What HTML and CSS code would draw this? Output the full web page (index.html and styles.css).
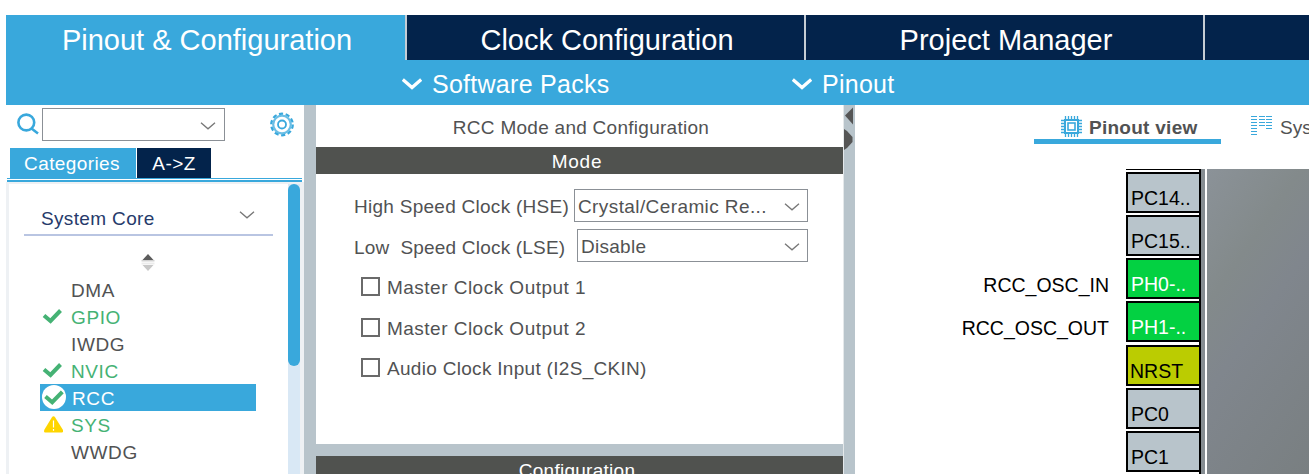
FILE: index.html
```html
<!DOCTYPE html>
<html lang="en">
<head>
<meta charset="utf-8">
<title>Pinout &amp; Configuration</title>
<link rel="stylesheet" href="styles.css">
</head>
<body>
<div class="app">
  <nav class="main-tabs">
    <div class="main-tab main-tab-active">Pinout &amp; Configuration</div>
    <div class="main-tab">Clock Configuration</div>
    <div class="main-tab">Project Manager</div>
    <div class="main-tab"></div>
  </nav>
  <div class="sub-bar">
    <div class="sub-item"><svg class="sub-chevron" viewBox="0 0 20 12"><path d="M.8 1.5 L10 9.5 L19.2 1.5"/></svg><span>Software Packs</span></div>
    <div class="sub-item"><svg class="sub-chevron" viewBox="0 0 20 12"><path d="M.8 1.5 L10 9.5 L19.2 1.5"/></svg><span>Pinout</span></div>
  </div>
  <main class="workspace">
    <aside class="sidebar">
      <div class="search-row">
        <svg class="search-icon" viewBox="0 0 22 22"><circle cx="9.3" cy="9.5" r="7.9"/><path d="M14.5 15.5 L21 20.5"/></svg>
        <div class="combo search-combo"><svg class="chevron" viewBox="0 0 16 8"><path d="M1 .8 L8 6.8 L15 .8"/></svg></div>
        <svg class="gear-icon" viewBox="0 0 24 25"><circle class="gear-teeth" cx="12" cy="12.5" r="10.8"/><circle class="gear-ring" cx="12" cy="12.5" r="8.8"/><circle class="gear-hub" cx="12" cy="12.5" r="4"/></svg>
      </div>
      <div class="side-tabs">
        <div class="side-tab side-tab-active">Categories</div>
        <div class="side-tab">A-&gt;Z</div>
      </div>
      <div class="side-rule"></div>
      <div class="tree">
        <div class="tree-content">
          <div class="group"><span>System Core</span><svg class="chevron" viewBox="0 0 16 8"><path d="M1 .8 L8 6.8 L15 .8"/></svg></div>
          <svg class="sorter" viewBox="0 0 14 18"><path fill="#5c5c5c" d="M7 0 L12.5 6 H1.5 Z"/><path fill="#d0d0d0" d="M.5 6 H13.5 V7.5 H.5 Z"/><path fill="#ececec" d="M.5 8.5 H13.5 V10.5 H.5 Z"/><path fill="#c8c8c8" d="M1.5 11 H12.5 L7 17 Z"/></svg>
          <ul class="items">
            <li class="item"><span class="mark"></span>DMA</li>
            <li class="item item-ok"><span class="mark"><svg viewBox="0 0 24 24"><path class="check" d="M2 11.5 L8.5 17 L18.5 6.5"/></svg></span>GPIO</li>
            <li class="item"><span class="mark"></span>IWDG</li>
            <li class="item item-ok"><span class="mark"><svg viewBox="0 0 24 24"><path class="check" d="M2 11.5 L8.5 17 L18.5 6.5"/></svg></span>NVIC</li>
            <li class="item item-selected"><span class="mark"><svg viewBox="0 0 24 24"><circle cx="12" cy="12" r="12" fill="#fff"/><path class="check" d="M3.5 11.5 L10.2 17.2 L20.3 6.8"/></svg></span>RCC</li>
            <li class="item item-ok"><span class="mark"><svg viewBox="0 0 24 24"><path fill="#fed500" d="M9.8 5.5 Q11.5 2.8 13.2 5.5 L21 18 Q21.5 20.5 20 20.5 H3 Q1.5 20.5 2.2 18 Z"/><path stroke="#fff" stroke-width="1.2" d="M11.5 8.5 V15.5 M11.5 17 V18.8"/></svg></span>SYS</li>
            <li class="item"><span class="mark"></span>WWDG</li>
          </ul>
        </div>
        <div class="scrollbar"><div class="scroll-thumb"></div></div>
      </div>
    </aside>
    <div class="splitter"></div>
    <section class="config">
      <div class="config-title">RCC Mode and Configuration</div>
      <div class="section-bar"><span>Mode</span></div>
      <div class="mode-form">
        <div class="field"><label>High Speed Clock (HSE)</label><div class="combo combo-hse"><span>Crystal/Ceramic Re...</span><svg class="chevron" viewBox="0 0 16 8"><path d="M1 .8 L8 6.8 L15 .8"/></svg></div></div>
        <div class="field field-lse"><label>Low&nbsp; Speed Clock (LSE)</label><div class="combo combo-lse"><span>Disable</span><svg class="chevron" viewBox="0 0 16 8"><path d="M1 .8 L8 6.8 L15 .8"/></svg></div></div>
        <div class="option"><span class="box"></span><span class="option-label">Master Clock Output 1</span></div>
        <div class="option"><span class="box"></span><span class="option-label">Master Clock Output 2</span></div>
        <div class="option"><span class="box"></span><span class="option-label audio">Audio Clock Input (I2S_CKIN)</span></div>
      </div>
      <div class="section-bar section-bar-lower"><span>Configuration</span></div>
    </section>
    <div class="splitter splitter-right">
      <svg viewBox="0 0 12 48"><path d="M9 2.5 L1 10.5 L9 19.5 Z"/><path d="M0 24 L3 26 L8.5 32 V37 L3 43 L0 45 Z"/></svg>
    </div>
    <section class="view">
      <div class="view-tabs">
        <div class="view-tab view-tab-active">
          <svg class="chip-icon" viewBox="0 0 21 21"><rect x="4" y="4" width="13" height="13" fill="none" stroke-width="2"/><rect x="7" y="7" width="7" height="7" fill="none" stroke-width="1.6"/><path stroke-width="1.3" d="M4.5 0V3M7.5 0V3M10.5 0V3M13.5 0V3M16.5 0V3M4.5 18V21M7.5 18V21M10.5 18V21M13.5 18V21M16.5 18V21M0 4.5H3M0 7.5H3M0 10.5H3M0 13.5H3M0 16.5H3M18 4.5H21M18 7.5H21M18 10.5H21M18 13.5H21M18 16.5H21"/></svg>
          <span>Pinout view</span>
        </div>
        <div class="view-tab">
          <svg class="list-icon" viewBox="0 0 21 20"><path d="M0 .5H6M8 .5H14M15 .5H21M0 3.5H6M8 3.5H14M15 3.5H21M0 6.5H6M8 6.5H14M15 6.5H21M0 9.5H6M8 9.5H14M15 9.5H21M0 12.5H6M15 12.5H21M0 15.5H6M0 18.5H6"/></svg>
          <span>Sys</span>
        </div>
      </div>
      <div class="pinout">
        <div class="signals"><span>RCC_OSC_IN</span><span>RCC_OSC_OUT</span></div>
        <div class="pins">
          <div class="pin">PC14..</div>
          <div class="pin">PC15..</div>
          <div class="pin pin-used">PH0-..</div>
          <div class="pin pin-used">PH1-..</div>
          <div class="pin pin-reset">NRST</div>
          <div class="pin">PC0</div>
          <div class="pin">PC1</div>
        </div>
        <div class="chip-edge"></div>
        <div class="chip-body"></div>
      </div>
    </section>
  </main>
</div>
</body>
</html>
```
FILE: styles.css
```css
* { box-sizing: border-box; }
body {
  margin: 0;
  background: #fff;
  color: #515253;
  font: 19px/27px "Liberation Sans", Arial, sans-serif;
  letter-spacing: .27px;
  overflow: hidden;
}
svg { display: block; flex: none; }
.app {
  height: 474px;
  padding: 15px 0 0 6px;
  display: flex;
  flex-direction: column;
  white-space: nowrap;
  overflow: hidden;
}

/* top navigation */
.main-tabs { display: flex; height: 45px; flex: none; background: #39a8dc; }
.main-tab {
  width: 399px;
  flex: none;
  padding: 3px 0 0 3px;
  background: #03234b;
  border-right: 2px solid #c5ccd4;
  color: #fff;
  font-size: 29px;
  line-height: 44px;
  letter-spacing: 0;
  text-align: center;
}
.main-tab-active { width: 401px; background: #39a8dc; }
.sub-bar {
  height: 45px;
  flex: none;
  padding-left: 396px;
  display: flex;
  background: #39a8dc;
  color: #fff;
  font-size: 25px;
  line-height: 48px;
}
.sub-item { width: 390px; display: flex; gap: 10px; }
.sub-chevron { width: 20px; height: 12px; margin-top: 18px; fill: none; stroke: #fff; stroke-width: 3.3; }

.workspace { flex: 1; min-height: 0; display: flex; }

/* sidebar */
.sidebar { width: 298px; flex: none; display: flex; flex-direction: column; }
.search-row { height: 43px; flex: none; display: flex; padding: 3px 0 0 11px; }
.search-icon { width: 22px; height: 22px; margin: 5px 3px 0 0; fill: none; stroke: #39a8dc; stroke-width: 2.6; }
.combo {
  height: 33px;
  border: 1px solid #8b9096;
  background: #fff;
  display: flex;
  align-items: center;
  justify-content: space-between;
  padding: 2px 7px 0 3px;
}
.chevron { width: 16px; height: 8px; fill: none; stroke: #777; stroke-width: 1.3; }
.search-combo { width: 183px; justify-content: flex-end; padding-right: 8px; }
.gear-icon { width: 24px; height: 25px; margin: 4px 0 0 45px; fill: none; stroke: #39a8dc; }
.gear-teeth { stroke-width: 2.2; stroke-dasharray: 4.2 2.586; }
.gear-ring { stroke-width: 2.2; stroke-opacity: .75; }
.gear-hub { stroke-width: 1.8; }
.side-tabs { display: flex; gap: 1px; height: 30px; flex: none; padding-left: 4px; color: #fff; line-height: 31px; text-align: center; letter-spacing: .4px; }
.side-tab { width: 74px; background: #03234b; }
.side-tab-active { width: 126px; padding-right: 2px; background: #39a8dc; }
.side-rule { height: 4px; flex: none; margin: 0 2px 0 1px; border-top: 1px solid #39a8dc; border-bottom: 2px solid #39a8dc; }
.tree { flex: 1; min-height: 0; display: flex; padding: 2px 4px 0 3px; background: #eef1f4; }
.tree-content { flex: 1; background: #fff; padding: 19px 15px 0; }
.group {
  height: 33px;
  padding: 2px 18px 0 17px;
  display: flex;
  justify-content: space-between;
  border-bottom: 2px solid #b9c5e2;
  color: #263a6b;
  letter-spacing: .35px;
}
.group .chevron { margin-top: 6px; }
.sorter { width: 14px; height: 18px; margin: 18px 0 0 117px; }
.items { list-style: none; margin: 4px 0 0 16px; padding: 0; width: 216px; }
.item { height: 27px; display: flex; line-height: 29px; letter-spacing: .6px; }
.item-ok { color: #45b274; }
.item-selected { background: #39a8dc; color: #fff; }
.item-selected .mark { width: 32px; }
.mark { width: 31px; padding: 1px 0 0 2px; }
.mark svg { width: 24px; height: 24px; }
.check { fill: none; stroke: #45b274; stroke-width: 4; }
.scrollbar { width: 12px; background: #d9e8f5; }
.scroll-thumb { height: 182px; border-radius: 6px; background: #39a8dc; }

.splitter { width: 12px; flex: none; background: #b8c4cb; }
.splitter-right { width: 12px; border-left: 1px solid #e4e8ea; }
.splitter-right svg { width: 12px; height: 48px; fill: #555; }

/* peripheral configuration */
.config { width: 527px; flex: none; display: flex; flex-direction: column; }
.config-title { height: 42px; flex: none; text-align: center; line-height: 45px; padding-left: 3px; }
.section-bar { height: 27px; flex: none; background: #50524f; color: #fff; text-align: center; line-height: 29px; padding-right: 5px; letter-spacing: .8px; }
.section-bar-lower { border-top: 12px solid #b8c4cb; height: 39px; letter-spacing: .27px; }
.mode-form { height: 270px; flex: none; padding: 15px 35px 0 38px; }
.field { height: 33px; margin-bottom: 7px; display: flex; justify-content: space-between; line-height: 36px; }
.field-lse label { line-height: 37px; letter-spacing: .2px; }
.field-lse .combo { padding-top: 3px; }
.combo-hse { width: 234px; letter-spacing: .4px; }
.combo-lse { width: 231px; }
.option { height: 27px; margin: 11px 0 13.5px 7px; display: flex; gap: 7px; }
.box { width: 19px; height: 19px; margin-top: 4px; border: 2px solid #6a6a6a; }
.option-label { line-height: 29px; letter-spacing: .48px; }
.audio { letter-spacing: .3px; }

/* pinout view */
.view { flex: 1; min-width: 0; display: flex; flex-direction: column; overflow: hidden; }
.view-tabs { height: 64px; flex: none; display: flex; gap: 12px; padding-left: 179px; }
.view-tab { height: 39px; flex: none; display: flex; padding: 10px 0 0 18px; line-height: 25px; }
.view-tab-active { width: 187px; padding-left: 27px; border-bottom: 5px solid #39a8dc; font-weight: bold; }
.view-tab:not(.view-tab-active) { letter-spacing: 0; }
.chip-icon { width: 21px; height: 21px; margin: 1px 7px 0 0; stroke: #39a8dc; }
.list-icon { width: 21px; height: 20px; margin: 1px 8px 0 0; stroke: #39a8dc; }
.pinout { flex: 1; min-height: 0; display: flex; color: #000; font-size: 19.5px; letter-spacing: 0; }
.signals { width: 271px; flex: none; padding: 95px 17px 0 0; display: flex; flex-direction: column; align-items: flex-end; line-height: 43px; }
.pins { width: 75px; flex: none; display: flex; flex-direction: column; gap: 2.15px; padding-top: 2px; border-top: 1px solid #000; border-right: 2px solid #000; }
.pin { height: 41px; flex: none; border: 2px solid #000; border-right: 0; background: #b8c4cb; padding: 11px 0 0 3px; line-height: 27px; }
.pin-used { background: #03d142; color: #fff; }
.pin-reset { background: #bbcc01; padding-left: 2px; }
.chip-edge { width: 6px; flex: none; background: #868d92; border-right: 2px solid #fff; }
.chip-body { flex: 1; background: linear-gradient(125deg, #8b9298 0%, #838a8b 30%, #80868d 50%, #797f81 100%); }
```
